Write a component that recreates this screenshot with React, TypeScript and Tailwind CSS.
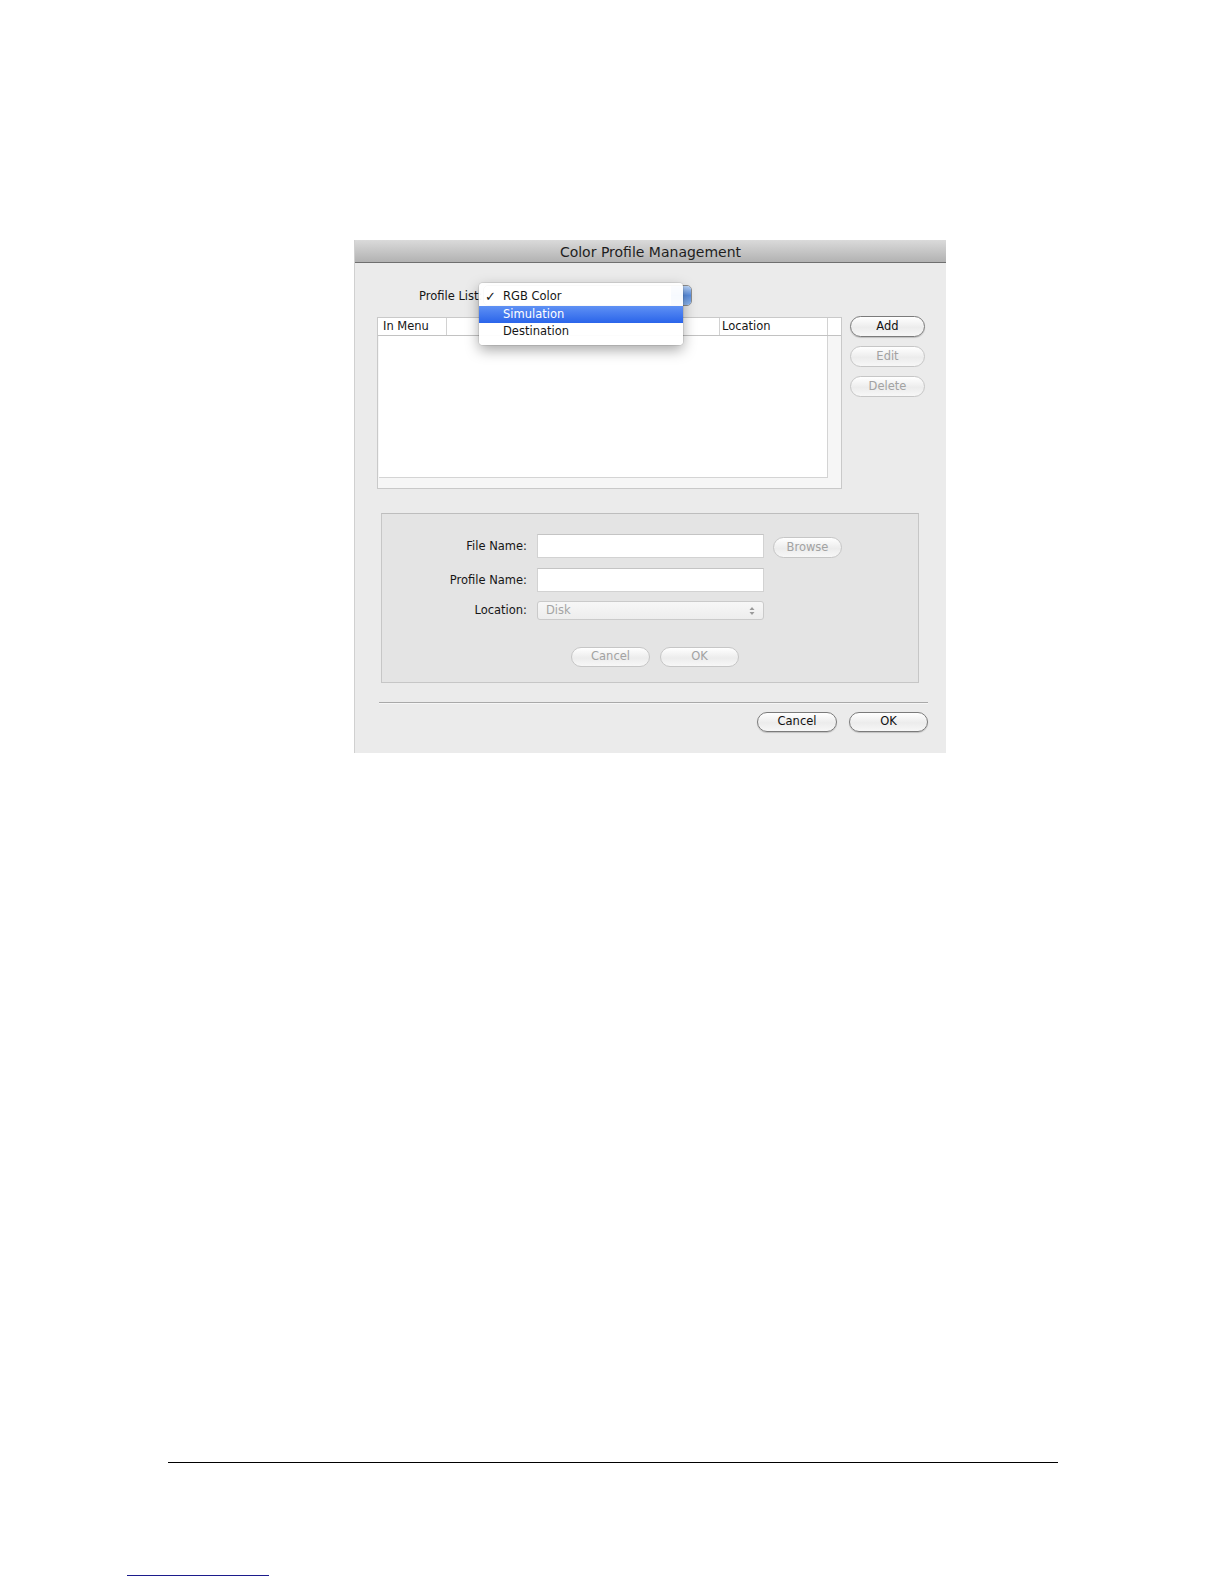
import clsx from "clsx";

function AquaButton({ label, disabled, className }: { label: string; disabled?: boolean; className?: string }) {
  return (
    <div
      className={clsx(
        "flex items-center justify-center rounded-full border bg-[linear-gradient(180deg,#ffffff,#ececec_55%,#f7f7f7)] text-[11.5px] leading-none",
        disabled
          ? "border-[#c6c6c6] text-[#a2a2a2]"
          : "border-[#7b7b7b] text-[#111] shadow-[0_1px_1px_rgba(0,0,0,0.18)]",
        className
      )}
    >
      {label}
    </div>
  );
}

function Field({ label, children }: { label: string; children: React.ReactNode }) {
  return (
    <div className="flex items-center">
      <div className="w-[145px] shrink-0 pt-px text-right text-[11.5px] text-[#161616]">{label}</div>
      <div className="ml-[10px] flex items-center">{children}</div>
    </div>
  );
}

function ProfileTable() {
  return (
    <div className="flex h-[172px] w-[465px] flex-col border border-[#c9c9c9] bg-[#f6f6f6]">
      <div className="flex h-[18px] shrink-0 border-b border-[#c2c2c2] bg-white text-[11.5px] text-[#161616]">
        <div className="flex w-[69px] items-center border-r border-[#d2d2d2] pl-[5px]">In Menu</div>
        <div className="w-[273px] border-r border-[#d2d2d2]" />
        <div className="flex w-[108px] items-center border-r border-[#d2d2d2] pl-[2px]">Location</div>
        <div className="flex-1" />
      </div>
      <div className="flex flex-1">
        <div className="flex w-[450px] flex-col">
          <div className="ml-px h-[142px] border-b border-r border-[#d4d4d4] bg-white" />
          <div className="flex-1" />
        </div>
        <div className="flex-1" />
      </div>
    </div>
  );
}

function PopupMenu() {
  return (
    <div className="absolute left-[124px] top-[20px] flex h-[62px] w-[204px] flex-col rounded-[4px] bg-white/95 pt-[5px] text-[11.5px] text-[#161616] shadow-[0_5px_14px_rgba(0,0,0,0.35),0_0_0_1px_rgba(0,0,0,0.08)]">
      <div className="flex h-[17.5px] items-center">
        <span className="w-[24px] pl-[6px] text-[13px] leading-none">✓</span>
        <span>RGB Color</span>
      </div>
      <div className="flex h-[17.5px] items-center bg-[linear-gradient(180deg,#5f91f4,#2a64ea)] text-white">
        <span className="w-[24px]" />
        <span>Simulation</span>
      </div>
      <div className="flex h-[17.5px] items-center">
        <span className="w-[24px]" />
        <span>Destination</span>
      </div>
    </div>
  );
}

export default function App() {
  return (
    <div className="h-[1584px] w-[1224px] overflow-hidden bg-white pt-[240px] font-['DejaVu_Sans',sans-serif]">
      <div className="ml-[355px] flex h-[513px] w-[591px] flex-col bg-[#ebebeb] shadow-[-1px_0_0_#d0d0d0]">
        <div className="flex h-[23px] shrink-0 items-center justify-center border-b border-[#6f6f6f] bg-[linear-gradient(180deg,#dadada,#b2b2b2)] pt-[2px] text-[14px] text-[#1e1e1e]">
          Color Profile Management
        </div>

        <div className="relative flex flex-1 flex-col">
          <div className="mt-[22px] flex h-[21px] items-center pl-[64px]">
            <div className="w-[64px] shrink-0 pt-[2px] text-[11.5px] text-[#161616]">Profile List:</div>
            <div className="flex h-[21px] w-[209px] overflow-hidden rounded-[5px] border border-[#8d8d8d] bg-white">
              <div className="flex-1" />
              <div className="w-[20px] bg-[linear-gradient(180deg,#b9d3f6,#5b8fe0_50%,#8fb8f0)]" />
            </div>
          </div>

          <div className="mt-[11px] flex pl-[22px]">
            <ProfileTable />
            <div className="-mt-px ml-[8px] flex flex-col gap-[9px]">
              <AquaButton label="Add" className="h-[21px] w-[75px]" />
              <AquaButton label="Edit" disabled className="h-[21px] w-[75px]" />
              <AquaButton label="Delete" disabled className="h-[21px] w-[75px]" />
            </div>
          </div>

          <div className="ml-[26px] mt-[24px] flex h-[170px] w-[538px] flex-col border border-[#c6c6c6] border-t-[#bdbdbd] bg-[#e4e4e4] pt-[20px]">
            <Field label="File Name:">
              <div className="h-[24px] w-[227px] border border-[#d2d2d2] border-t-[#c4c4c4] bg-white" />
              <AquaButton label="Browse" disabled className="ml-[9px] mt-[3px] h-[21px] w-[69px]" />
            </Field>
            <div className="mt-[10px]">
              <Field label="Profile Name:">
                <div className="h-[24px] w-[227px] border border-[#d2d2d2] border-t-[#c4c4c4] bg-white" />
              </Field>
            </div>
            <div className="mt-[9px]">
              <Field label="Location:">
                <div className="flex h-[19px] w-[227px] items-center rounded-[3px] border border-[#cacaca] bg-[linear-gradient(180deg,#f7f7f7,#ededed)] pl-[8px] pr-[8px] text-[11.5px] text-[#a4a4a4]">
                  <span className="flex-1">Disk</span>
                  <svg width="6" height="10" viewBox="0 0 6 10" className="text-[#9a9a9a]">
                    <path d="M3 1 L5.5 4 H0.5 Z" fill="currentColor" />
                    <path d="M3 9 L5.5 6 H0.5 Z" fill="currentColor" />
                  </svg>
                </div>
              </Field>
            </div>
            <div className="ml-[189px] mt-[27px] flex gap-[10px]">
              <AquaButton label="Cancel" disabled className="h-[20px] w-[79px]" />
              <AquaButton label="OK" disabled className="h-[20px] w-[79px]" />
            </div>
          </div>

          <div className="ml-[24px] mt-[19px] h-[2px] w-[549px] border-t border-[#a9a9a9] bg-[#f6f6f6]" />

          <div className="mt-[8px] flex justify-end gap-[12px] pr-[18px]">
            <AquaButton label="Cancel" className="h-[20px] w-[80px]" />
            <AquaButton label="OK" className="h-[20px] w-[79px]" />
          </div>

          <PopupMenu />
        </div>
      </div>

      <div className="ml-[168px] mt-[709px] h-px w-[890px] bg-black" />
      <div className="ml-[127px] mt-[112px] h-px w-[142px] bg-[#1c1c8c]" />
    </div>
  );
}
